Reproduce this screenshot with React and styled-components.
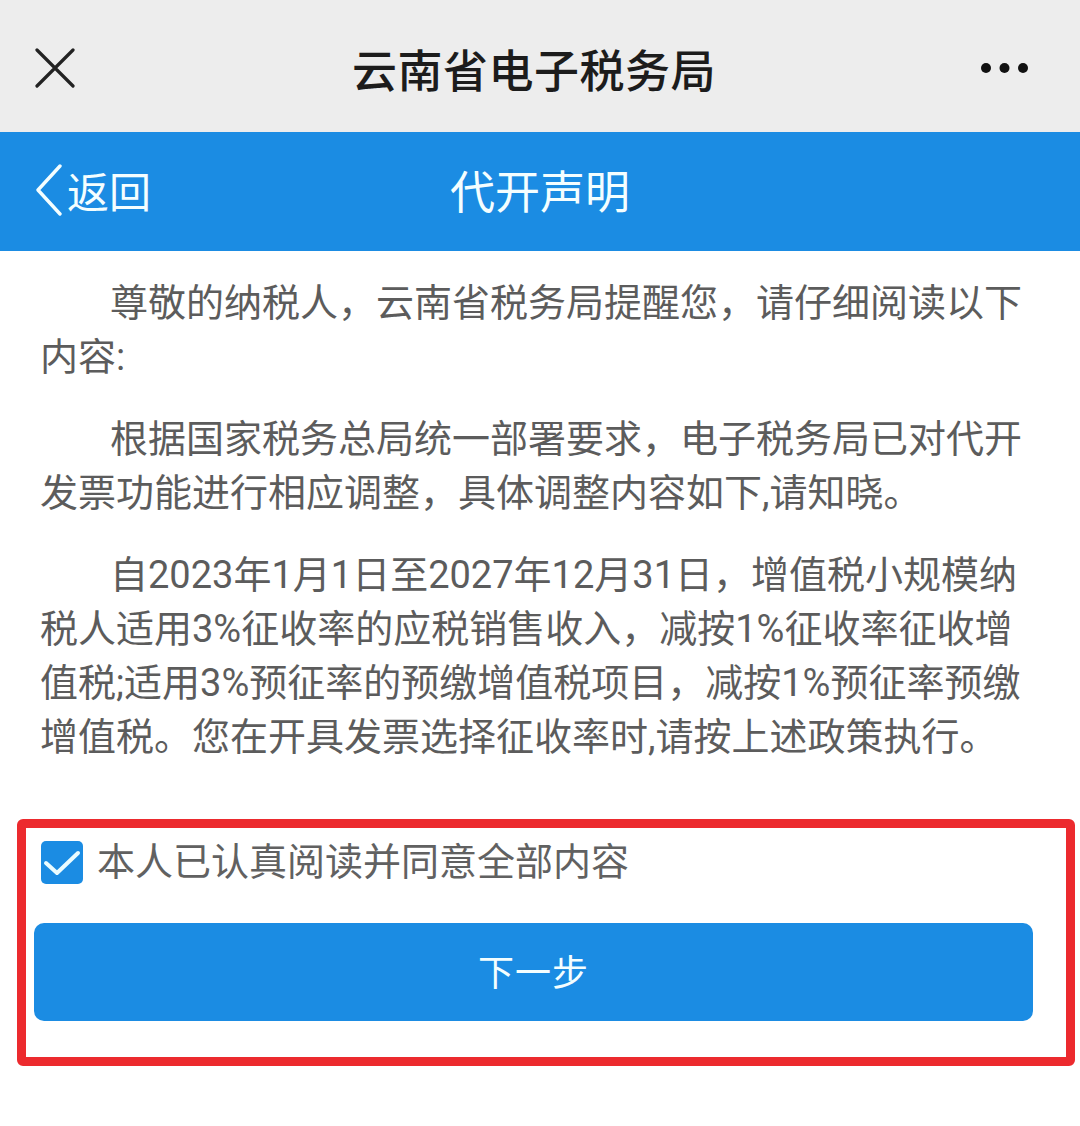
import React from "react";
import styled, { createGlobalStyle } from "styled-components";

const Global = createGlobalStyle`
  html, body { margin: 0; padding: 0; background: #ffffff; }
  body { font-family: Roboto, "Noto Sans CJK SC", sans-serif; }
  * { box-sizing: border-box; }
`;

const Page = styled.div`
  width: 1080px;
  min-height: 1126px;
  background: #fff;
`;

const TopBar = styled.header`
  height: 132px;
  background: #ededed;
  display: grid;
  grid-template-columns: 120px 1fr 132px;
  align-items: center;
  padding-top: 4px;
`;

const IconCell = styled.div`
  display: flex;
  align-items: center;
  justify-content: ${(p) => (p.$end ? "flex-end" : "flex-start")};
  padding: ${(p) => (p.$end ? "0 52px 0 0" : "0 0 0 35px")};
`;

const TopTitle = styled.h1`
  margin: 0;
  text-align: center;
  font-family: "Noto Sans CJK SC", sans-serif;
  font-weight: 500;
  font-size: 45px;
  letter-spacing: 0.5px;
  color: #1c1c1c;
`;

const NavBar = styled.nav`
  height: 119px;
  background: #1b8ce3;
  display: grid;
  grid-template-columns: 1fr auto 1fr;
  align-items: center;
  padding-bottom: 4px;
`;

const Back = styled.div`
  display: flex;
  align-items: center;
  gap: 4px;
  padding-left: 35px;
  color: #f4feff;
  font-family: "Noto Sans CJK SC", sans-serif;
  font-size: 42px;
`;

const NavTitle = styled.div`
  color: #f4feff;
  font-family: "Noto Sans CJK SC", sans-serif;
  font-size: 45px;
  text-align: center;
`;

const Content = styled.main`
  padding: 25px 42px 0 40px;
`;

const Para = styled.p`
  margin: 0 0 28px;
  font-size: 38px;
  line-height: 54px;
  text-indent: 70px;
  color: #5c5c5c;
  white-space: nowrap;
  &:last-child { margin-bottom: 0; }
`;

const Annotation = styled.section`
  width: 1058px;
  margin: 55px 0 0 17px;
  border: 9px solid #ec2a2e;
  border-radius: 6px;
  padding: 13px 33px 36px 8px;
`;

const AgreeRow = styled.label`
  display: flex;
  align-items: center;
  gap: 14px;
  padding-left: 7px;
  height: 43px;
  font-family: "Noto Sans CJK SC", sans-serif;
  font-size: 38px;
  color: #616161;
`;

const AgreeText = styled.span`
  line-height: 43px;
  padding-bottom: 8px;
`;

const Box = styled.span`
  width: 42px;
  height: 43px;
  border-radius: 5px;
  background: #1b8ce3;
  display: flex;
  flex-shrink: 0;
`;

const NextButton = styled.button`
  display: flex;
  align-items: center;
  justify-content: center;
  width: 999px;
  height: 98px;
  margin-top: 39px;
  padding: 0 0 5px;
  border: none;
  border-radius: 10px;
  background: #1b8ce3;
  color: #f4feff;
  font-family: "Noto Sans CJK SC", sans-serif;
  font-size: 36px;
  letter-spacing: 1px;
`;

const paragraphs = [
  ["尊敬的纳税人，云南省税务局提醒您，请仔细阅读以下", "内容:"],
  ["根据国家税务总局统一部署要求，电子税务局已对代开", "发票功能进行相应调整，具体调整内容如下,请知晓。"],
  [
    "自2023年1月1日至2027年12月31日，增值税小规模纳",
    "税人适用3%征收率的应税销售收入，减按1%征收率征收增",
    "值税;适用3%预征率的预缴增值税项目，减按1%预征率预缴",
    "增值税。您在开具发票选择征收率时,请按上述政策执行。",
  ],
];

export default function App() {
  return (
    <Page>
      <Global />
      <TopBar>
        <IconCell>
          <svg width="40" height="40" viewBox="0 0 40 40">
            <path d="M2 2 L38 38 M38 2 L2 38" stroke="#222" strokeWidth="3.2" strokeLinecap="round" />
          </svg>
        </IconCell>
        <TopTitle>云南省电子税务局</TopTitle>
        <IconCell $end>
          <svg width="48" height="12" viewBox="0 0 48 12">
            <circle cx="6" cy="6" r="5" fill="#111" />
            <circle cx="24.5" cy="6" r="5" fill="#111" />
            <circle cx="43" cy="6" r="5" fill="#111" />
          </svg>
        </IconCell>
      </TopBar>
      <NavBar>
        <Back>
          <svg width="28" height="52" viewBox="0 0 28 52">
            <path d="M25 2 L3 26 L25 50" fill="none" stroke="#f4feff" strokeWidth="3.4" strokeLinecap="round" strokeLinejoin="round" />
          </svg>
          <span>返回</span>
        </Back>
        <NavTitle>代开声明</NavTitle>
        <div />
      </NavBar>
      <Content>
        {paragraphs.map((lines, i) => (
          <Para key={i}>
            {lines.map((l, j) => (
              <React.Fragment key={j}>
                {l}
                {j < lines.length - 1 && <br />}
              </React.Fragment>
            ))}
          </Para>
        ))}
      </Content>
      <Annotation>
        <AgreeRow>
          <Box>
            <svg width="42" height="43" viewBox="0 0 42 43">
              <path d="M5 22 L16 32 L37 12" fill="none" stroke="#eafcff" strokeWidth="4" strokeLinecap="round" strokeLinejoin="round" />
            </svg>
          </Box>
          <AgreeText>本人已认真阅读并同意全部内容</AgreeText>
        </AgreeRow>
        <NextButton>下一步</NextButton>
      </Annotation>
    </Page>
  );
}
